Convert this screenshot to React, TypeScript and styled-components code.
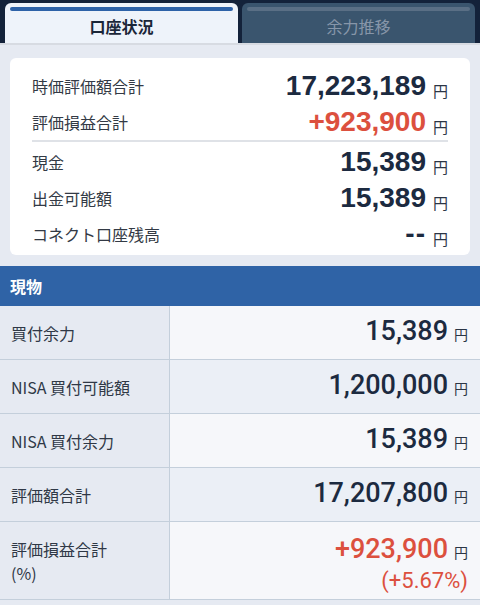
import styled, { createGlobalStyle } from "styled-components";

const GlobalStyle = createGlobalStyle`
  html, body {
    margin: 0;
    padding: 0;
    background: #e6eaf2;
  }
  body {
    font-family: "Noto Sans CJK JP", "Noto Sans", sans-serif;
  }
`

interface SummaryRow {
  label: string
  value: string
  red?: boolean
  divider?: boolean
}

interface TableRow {
  label: string[]
  value: string
  sub?: string
  red?: boolean
}

const summary: SummaryRow[] = [
  { label: "時価評価額合計", value: "17,223,189" },
  { label: "評価損益合計", value: "+923,900", red: true, divider: true },
  { label: "現金", value: "15,389" },
  { label: "出金可能額", value: "15,389" },
  { label: "コネクト口座残高", value: "--" },
]

const rows: TableRow[] = [
  { label: ["買付余力"], value: "15,389" },
  { label: ["NISA 買付可能額"], value: "1,200,000" },
  { label: ["NISA 買付余力"], value: "15,389" },
  { label: ["評価額合計"], value: "17,207,800" },
  { label: ["評価損益合計", "(%)"], value: "+923,900", sub: "(+5.67%)", red: true },
]

function App() {
  return (
    <Page>
      <GlobalStyle />
      <TabBar>
        <Tab active>
          <TabLine active />
          <TabText active>口座状況</TabText>
        </Tab>
        <Tab>
          <TabLine />
          <TabText>余力推移</TabText>
        </Tab>
      </TabBar>
      <Body>
        <Card>
          {summary.map(r => (
            <SumRow key={r.label} divider={r.divider}>
              <SumLabel>{r.label}</SumLabel>
              <SumValue red={r.red} dash={r.value === "--"}>{r.value}</SumValue>
              <Yen>円</Yen>
            </SumRow>
          ))}
        </Card>
        <SectionHeader>現物</SectionHeader>
        <Table>
          {rows.map((r, i) => (
            <Row key={r.label.join("")} tall={!!r.sub}>
              <LabelCell>
                {r.label.map(l => <div key={l}>{l}</div>)}
              </LabelCell>
              <ValueCell shade={i % 2 === 1} tall={!!r.sub}>
                <ValueLine>
                  <TableValue red={r.red}>{r.value}</TableValue>
                  <SmallYen>円</SmallYen>
                </ValueLine>
                {r.sub && <SubValue>{r.sub}</SubValue>}
              </ValueCell>
            </Row>
          ))}
        </Table>
      </Body>
    </Page>
  )
}
export default App;

const Page = styled.div`
  width: 480px;
  min-height: 605px;
  background: #e6eaf2;
`

const TabBar = styled.div`
  display: flex;
  gap: 4px;
  padding: 3px 5px 0;
  background: #13223a;
  border-bottom: 2px solid #d7dbe2;
`

const Tab = styled.div<{ active?: boolean }>`
  flex: 1;
  height: 40px;
  border-radius: 6px 6px 0 0;
  background: ${p => p.active ? "#eef3fa" : "#3a556e"};
  display: flex;
  flex-direction: column;
  align-items: stretch;
  padding: 4px 5px 0;
  box-sizing: border-box;
`

const TabLine = styled.div<{ active?: boolean }>`
  height: 4px;
  border-radius: 2px;
  background: ${p => p.active ? "#2d62a8" : "#5a6f85"};
`

const TabText = styled.div<{ active?: boolean }>`
  flex: 1;
  display: flex;
  align-items: center;
  justify-content: center;
  font-size: 16px;
  font-weight: ${p => p.active ? 700 : 400};
  color: ${p => p.active ? "#1b2638" : "#8796a9"};
  padding-bottom: 2px;
`

const Body = styled.div`
  padding-top: 13px;
`

const Card = styled.div`
  margin: 0 10px 11px;
  background: #ffffff;
  border-radius: 6px;
  padding: 10px 22px 3px;
`

const SumRow = styled.div<{ divider?: boolean }>`
  display: flex;
  align-items: center;
  height: 36px;
  border-bottom: ${p => p.divider ? "2px solid #dfe2e7" : "none"};
  margin-bottom: ${p => p.divider ? "2px" : "0"};
`

const SumLabel = styled.div`
  flex: 1;
  font-size: 16px;
  color: #333a45;
`

const SumValue = styled.div<{ red?: boolean; dash?: boolean }>`
  font-family: "Liberation Sans", Arial, sans-serif;
  font-weight: 700;
  font-size: 28px;
  letter-spacing: ${p => p.dash ? "1px" : "0"};
  color: ${p => p.red ? "#dc503e" : "#1c2a40"};
`

const Yen = styled.span`
  font-size: 15px;
  color: #2b3545;
  margin-left: 7px;
  padding-top: 8px;
`

const SectionHeader = styled.div`
  height: 40px;
  background: #2f63a6;
  color: #ffffff;
  font-size: 16px;
  font-weight: 700;
  display: flex;
  align-items: center;
  padding-left: 10px;
`

const Table = styled.div`
  display: flex;
  flex-direction: column;
`

const Row = styled.div<{ tall?: boolean }>`
  display: grid;
  grid-template-columns: 170px 1fr;
  height: ${p => p.tall ? "77px" : "53px"};
  border-bottom: 1px solid #c4cfdb;
`

const LabelCell = styled.div`
  background: #e6eaf2;
  border-right: 1px solid #c4cfdb;
  display: flex;
  flex-direction: column;
  justify-content: center;
  padding-left: 11px;
  font-size: 16px;
  line-height: 24px;
  color: #2f3846;
`

const ValueCell = styled.div<{ shade?: boolean; tall?: boolean }>`
  background: ${p => p.shade ? "#ebeff6" : "#f6f7fa"};
  display: flex;
  flex-direction: column;
  justify-content: center;
  align-items: flex-end;
  padding: ${p => p.tall ? "6px" : "0"} 12px 0 0;
`

const ValueLine = styled.div`
  display: flex;
  align-items: baseline;
  line-height: 32px;
`

const TableValue = styled.span<{ red?: boolean }>`
  font-family: Roboto, "Liberation Sans", sans-serif;
  font-weight: 500;
  font-size: 27px;
  color: ${p => p.red ? "#dc503e" : "#1c2a40"};
`

const SmallYen = styled.span`
  font-size: 14px;
  color: #2b3545;
  margin-left: 6px;
`

const SubValue = styled.div`
  font-family: Roboto, "Liberation Sans", sans-serif;
  font-size: 22px;
  line-height: 26px;
  color: #dc503e;
`
